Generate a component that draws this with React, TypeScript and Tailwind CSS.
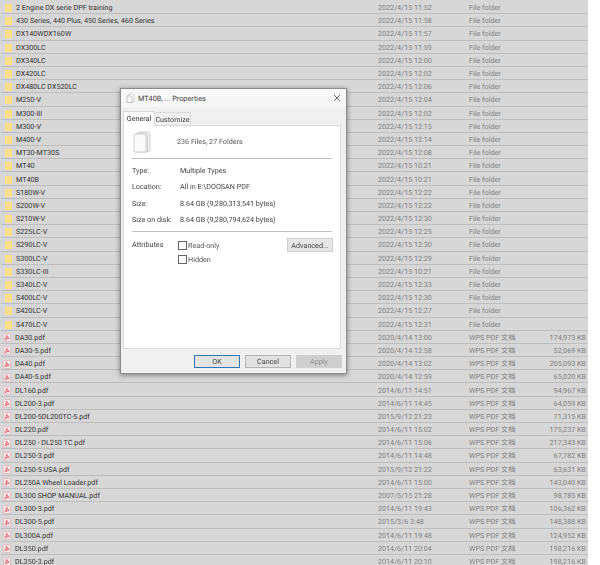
const folders = [
  ["2 Engine DX serie DPF training", "2022/4/15 11:52"],
  ["430 Series, 440 Plus, 450 Series, 460 Series", "2022/4/15 11:58"],
  ["DX140WDX160W", "2022/4/15 11:57"],
  ["DX300LC", "2022/4/15 11:59"],
  ["DX340LC", "2022/4/15 12:00"],
  ["DX420LC", "2022/4/15 12:02"],
  ["DX480LC DX520LC", "2022/4/15 12:06"],
  ["M250-V", "2022/4/15 12:04"],
  ["M300-III", "2022/4/15 12:02"],
  ["M300-V", "2022/4/15 12:15"],
  ["M400-V", "2022/4/15 12:14"],
  ["MT30-MT30S", "2022/4/15 12:08"],
  ["MT40", "2022/4/15 10:21"],
  ["MT40B", "2022/4/15 10:21"],
  ["S180W-V", "2022/4/15 12:22"],
  ["S200W-V", "2022/4/15 12:22"],
  ["S210W-V", "2022/4/15 12:30"],
  ["S225LC-V", "2022/4/15 12:25"],
  ["S290LC-V", "2022/4/15 12:30"],
  ["S300LC-V", "2022/4/15 12:29"],
  ["S330LC-III", "2022/4/15 10:21"],
  ["S340LC-V", "2022/4/15 12:33"],
  ["S400LC-V", "2022/4/15 12:30"],
  ["S420LC-V", "2022/4/15 12:27"],
  ["S470LC-V", "2022/4/15 12:31"],
];

const pdfs = [
  ["DA30.pdf", "2020/4/14 13:00", "174,973 KB"],
  ["DA30-5.pdf", "2020/4/14 12:58", "52,069 KB"],
  ["DA40.pdf", "2020/4/14 13:02", "205,093 KB"],
  ["DA40-5.pdf", "2020/4/14 12:59", "65,020 KB"],
  ["DL160.pdf", "2014/6/11 14:51", "94,967 KB"],
  ["DL200-3.pdf", "2014/6/11 14:45", "64,059 KB"],
  ["DL200-5DL200TC-5.pdf", "2015/9/12 21:23", "71,315 KB"],
  ["DL220.pdf", "2014/6/11 15:02", "175,237 KB"],
  ["DL250 - DL250 TC.pdf", "2014/6/11 15:06", "217,343 KB"],
  ["DL250-3.pdf", "2014/6/11 14:48", "67,782 KB"],
  ["DL250-5 USA.pdf", "2015/9/12 21:22", "63,631 KB"],
  ["DL250A Wheel Loader.pdf", "2014/6/11 15:00", "143,040 KB"],
  ["DL300 SHOP MANUAL.pdf", "2007/5/15 21:28", "98,785 KB"],
  ["DL300-3.pdf", "2014/6/11 19:43", "106,362 KB"],
  ["DL300-5.pdf", "2015/3/6 3:48", "148,388 KB"],
  ["DL300A.pdf", "2014/6/11 19:48", "124,952 KB"],
  ["DL350.pdf", "2014/6/11 20:04", "198,216 KB"],
  ["DL350-3.pdf", "2014/6/11 20:10", "198,216 KB"],
];

function FolderIcon() {
  return (
    <svg width="7" height="8" viewBox="0 0 7 8" className="ml-[1px] mr-[4px] shrink-0">
      <rect x="0" y="0" width="7" height="8" fill="#fcdf86" />
    </svg>
  );
}

function PdfIcon() {
  return (
    <svg width="8" height="9" viewBox="0 0 8 9" className="-ml-[1px] mr-[4px] shrink-0">
      <rect x="0.5" y="0.5" width="7" height="8" rx="1" fill="#f8e8e8" stroke="#dcb0b4" strokeWidth="0.7" />
      <path d="M2.2 6.8C3 5 3.6 3.4 3.5 2.2c1 1.6 1.6 2.6 2.6 3.2-1.4 0-2.6.4-3.9 1.4z" fill="#f4c4c8" stroke="#dc5660" strokeWidth="0.9" />
    </svg>
  );
}

function Row({ icon, name, date, type, size }: { icon: React.ReactNode; name: string; date: string; type: string; size?: string }) {
  return (
    <div className="flex h-[13.2px] shrink-0 items-center border-b border-[#bebebe] pt-[2px] text-[7.2px] leading-[10px]">
      <div className="flex w-[377px] items-center pl-[3px] text-[#333]">
        {icon}
        <span className="whitespace-nowrap">{name}</span>
      </div>
      <div className="w-[91px] whitespace-nowrap text-[#808080]">{date}</div>
      <div className="w-[62px] whitespace-nowrap text-[#808080]">{type}</div>
      <div className="w-[55px] whitespace-nowrap text-right text-[#808080]">{size}</div>
    </div>
  );
}

function InfoRow({ label, value }: { label: string; value: string }) {
  return (
    <div className="flex h-[16.3px] items-center">
      <div className="w-[48px] text-[#444]">{label}</div>
      <div className="text-[#444]">{value}</div>
    </div>
  );
}

function Check({ label }: { label: string }) {
  return (
    <div className="flex items-center gap-[1px]">
      <div className="h-[9px] w-[9px] border border-[#666] bg-white" />
      <span className="text-[#555]">{label}</span>
    </div>
  );
}

function Btn({ label, className }: { label: string; className: string }) {
  return (
    <div className={`flex h-[13px] w-[46px] items-center justify-center ${className}`}>{label}</div>
  );
}

export default function App() {
  return (
    <div className="relative h-[565px] w-[600px] overflow-hidden bg-white font-['Roboto','Noto_Sans_CJK_SC',sans-serif] [text-rendering:geometricPrecision]">
      <div className="flex h-[565px] w-[588px] flex-col bg-[#d7d7d7] pl-[1px] pt-[1px] [filter:blur(0.3px)]">
        {folders.map(([name, date]) => (
          <Row key={name} icon={<FolderIcon />} name={name} date={date} type="File folder" />
        ))}
        {pdfs.map(([name, date, size]) => (
          <Row key={name} icon={<PdfIcon />} name={name} date={date} type="WPS PDF 文档" size={size} />
        ))}
      </div>

      {/* properties dialog */}
      <div className="absolute left-[120px] top-[88px] flex h-[286px] w-[227px] flex-col border border-[#8c8c8c] bg-[#f0f0f0] text-[7.2px] leading-[9px] shadow-[0_1px_5px_rgba(0,0,0,0.45)] [filter:blur(0.25px)]">
        <div className="flex h-[18px] shrink-0 items-center bg-[#f7f7f7] pl-[5px] pr-[5px] text-[7.3px] text-[#444]">
          <svg width="9" height="10" viewBox="0 0 9 10" className="mr-[3px]">
            <path d="M3 1h4l1 1v7H3z" fill="#fff" stroke="#bbb" strokeWidth="0.7" />
            <path d="M1 3h4l1 1v5.5H1z" fill="#fff" stroke="#aaa" strokeWidth="0.7" />
          </svg>
          <span>MT40B, ... Properties</span>
          <svg width="8" height="8" viewBox="0 0 8 8" className="ml-auto">
            <path d="M1 1l6 6M7 1l-6 6" stroke="#444" strokeWidth="0.8" />
          </svg>
        </div>
        <div className="flex h-[18px] shrink-0 items-end pl-[2px]">
          <div className="relative z-10 -mb-px flex h-[15px] w-[32px] items-center justify-center border border-b-0 border-[#d9d9d9] bg-white pb-[1px] text-[#333]">General</div>
          <div className="flex h-[13px] w-[36px] items-center justify-center border-t border-r border-[#d9d9d9] text-[#444]">Customize</div>
        </div>
        <div className="ml-[2px] mr-[5px] flex min-h-0 flex-1 flex-col border border-[#d9d9d9] bg-white px-[8px]">
          <div className="flex h-[33px] shrink-0 items-center border-b border-[#bfbfbf] pb-[1px]">
            <svg width="18" height="22" viewBox="0 0 18 22" className="ml-[1px] mr-[26px] mt-[1px] shrink-0">
              <path d="M6 1h9l2 2v17H6z" fill="#f3f3f3" stroke="#c4c4c4" strokeWidth="0.8" />
              <path d="M3.5 2h9l2 2v17h-11z" fill="#f6f6f6" stroke="#c4c4c4" strokeWidth="0.8" />
              <path d="M1 3h10l2 2v16H1z" fill="#fafafa" stroke="#c4c4c4" strokeWidth="0.8" />
            </svg>
            <span className="text-[#555]">236 Files, 27 Folders</span>
          </div>
          <div className="flex h-[73px] shrink-0 flex-col justify-center border-b border-[#bfbfbf]">
            <InfoRow label="Type:" value="Multiple Types" />
            <InfoRow label="Location:" value="All in E:\DOOSAN PDF" />
            <InfoRow label="Size:" value="8.64 GB (9,280,313,541 bytes)" />
            <InfoRow label="Size on disk:" value="8.64 GB (9,280,794,624 bytes)" />
          </div>
          <div className="flex pt-[6px]">
            <div className="w-[46px] pt-[2px] text-[#444]">Attributes</div>
            <div className="flex flex-col gap-[4.5px] pt-[3px]">
              <Check label="Read-only" />
              <Check label="Hidden" />
            </div>
            <div className="-mr-[1px] ml-auto flex h-[14px] w-[46px] items-center justify-center border border-[#cfcfcf] bg-[#e6e6e6] text-[#444]">Advanced...</div>
          </div>
        </div>
        <div className="flex h-[24px] shrink-0 items-center justify-end gap-[5px] pr-[4px]">
          <Btn label="OK" className="border border-[#2f78b8] bg-[#e4e4e4] text-[#444]" />
          <Btn label="Cancel" className="border border-[#b5b5b5] bg-[#e1e1e1] text-[#444]" />
          <Btn label="Apply" className="border border-[#cfcfcf] bg-[#cfcfcf] text-[#8d8d8d]" />
        </div>
      </div>
    </div>
  );
}
